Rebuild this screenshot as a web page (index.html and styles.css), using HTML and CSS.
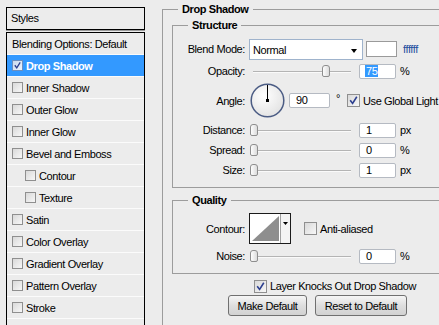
FILE: index.html
```html
<!DOCTYPE html>
<html lang="en">
<head>
  <meta charset="UTF-8">
  <title>Layer Style</title>
  <link rel="stylesheet" href="styles.css">
</head>
<body>
  <div class="dialog">
    <div class="sidebar">
      <div class="styles-head">Styles</div>
      <ul class="style-list">
        <li class="style-item plain">Blending Options: Default</li>
        <li class="style-item selected"><span class="check"><svg viewBox="0 0 11 11"><path d="M2.2 5.2 L4.6 8.4 L8.8 1.8" /></svg></span>Drop Shadow</li>
        <li class="style-item"><span class="check"></span>Inner Shadow</li>
        <li class="style-item"><span class="check"></span>Outer Glow</li>
        <li class="style-item"><span class="check"></span>Inner Glow</li>
        <li class="style-item"><span class="check"></span>Bevel and Emboss</li>
        <li class="style-item sub"><span class="check"></span>Contour</li>
        <li class="style-item sub"><span class="check"></span>Texture</li>
        <li class="style-item"><span class="check"></span>Satin</li>
        <li class="style-item"><span class="check"></span>Color Overlay</li>
        <li class="style-item"><span class="check"></span>Gradient Overlay</li>
        <li class="style-item"><span class="check"></span>Pattern Overlay</li>
        <li class="style-item"><span class="check"></span>Stroke</li>
        <li class="style-item"></li>
      </ul>
    </div>

    <div class="panel">
      <div class="group outer">
        <div class="group-title">Drop Shadow</div>

        <div class="group structure">
          <div class="group-title">Structure</div>

          <div class="row blend-row">
            <span class="label">Blend Mode:</span>
            <div class="select">Normal<span class="arrow"></span></div>
            <span class="swatch"></span>
            <span class="hex">ffffff</span>
          </div>

          <div class="row">
            <span class="label">Opacity:</span>
            <div class="slider"><span class="thumb" style="left: 72px"></span></div>
            <span class="field"><span class="sel">75</span></span>
            <span class="unit">%</span>
          </div>

          <div class="row angle-row">
            <span class="label">Angle:</span>
            <svg class="dial" viewBox="0 0 35 35">
              <defs>
                <radialGradient id="dialFill" cx="0.4" cy="0.35" r="0.7">
                  <stop offset="0" stop-color="#ffffff" />
                  <stop offset="1" stop-color="#e2e2e2" />
                </radialGradient>
              </defs>
              <circle cx="17.5" cy="17.5" r="16.3" fill="url(#dialFill)" stroke="#4b5c84" stroke-width="1.5" />
              <line x1="17.5" y1="17.5" x2="17.5" y2="2" stroke="#000" stroke-width="1" />
              <rect x="16" y="16" width="3" height="3" fill="#000" />
            </svg>
            <span class="field angle-field">90</span>
            <span class="degree">°</span>
            <span class="check big"><svg viewBox="0 0 11 11"><path d="M2.2 5.2 L4.6 8.4 L8.8 1.8" /></svg></span>
            <span class="check-text">Use Global Light</span>
          </div>

          <div class="row">
            <span class="label">Distance:</span>
            <div class="slider"><span class="thumb" style="left: 0px"></span></div>
            <span class="field">1</span>
            <span class="unit">px</span>
          </div>

          <div class="row">
            <span class="label">Spread:</span>
            <div class="slider"><span class="thumb" style="left: 0px"></span></div>
            <span class="field">0</span>
            <span class="unit">%</span>
          </div>

          <div class="row">
            <span class="label">Size:</span>
            <div class="slider"><span class="thumb" style="left: 0px"></span></div>
            <span class="field">1</span>
            <span class="unit">px</span>
          </div>
        </div>

        <div class="group quality">
          <div class="group-title">Quality</div>

          <div class="row contour-row">
            <span class="label">Contour:</span>
            <svg class="contour" viewBox="0 0 42 31">
              <rect x="0.5" y="0.5" width="41" height="30" fill="#ffffff" stroke="#1a1a1a" />
              <polygon points="3,28 30,3 30,28" fill="#8e8e8e" />
              <rect x="31" y="1" width="10" height="29" fill="#f4f4f4" />
              <line x1="31.5" y1="1" x2="31.5" y2="30" stroke="#a0a0a0" />
              <polygon points="34,9 39,9 36.5,12" fill="#000" />
            </svg>
            <span class="check big aa"></span>
            <span class="check-text">Anti-aliased</span>
          </div>

          <div class="row">
            <span class="label">Noise:</span>
            <div class="slider"><span class="thumb" style="left: 0px"></span></div>
            <span class="field">0</span>
            <span class="unit">%</span>
          </div>
        </div>

        <div class="knock-row">
          <span class="check big"><svg viewBox="0 0 11 11"><path d="M2.2 5.2 L4.6 8.4 L8.8 1.8" /></svg></span>
          <span class="check-text">Layer Knocks Out Drop Shadow</span>
        </div>

        <div class="buttons">
          <button class="btn make">Make Default</button>
          <button class="btn reset">Reset to Default</button>
        </div>
      </div>
    </div>
  </div>
</body>
</html>
```

FILE: styles.css
```css
body {
  margin: 0;
  background-color: #ececec;
  font-family: "Liberation Sans", Arial, sans-serif;
  font-size: 11px;
  letter-spacing: -0.4px;
  color: #000;
  overflow: hidden;
}
.dialog {
  display: flex;
  width: 439px;
  height: 325px;
  overflow: hidden;
}

/* left list */
.sidebar {
  width: 139px;
  margin: 7px 0 0 6px;
  flex-shrink: 0;
}
.styles-head {
  height: 21px;
  line-height: 20px;
  padding-left: 4px;
  border: 1px solid #000;
  box-shadow: 0 1px 0 #9a9a9a;
}
.style-list {
  list-style: none;
  margin: 2px 0 0 0;
  padding: 0;
  border: 1px solid #000;
  border-bottom: none;
  height: 400px;
}
.style-item {
  display: flex;
  align-items: center;
  height: 21px;
  padding-left: 5px;
  border-bottom: 1px solid #fbfbfb;
  white-space: nowrap;
}
.style-item.sub {
  padding-left: 18px;
}
.style-item.selected {
  background-color: #3399ff;
  color: #fff;
  font-weight: bold;
}
.check {
  display: inline-flex;
  width: 11px;
  height: 11px;
  box-sizing: border-box;
  border: 1px solid #8f8f8f;
  background: linear-gradient(135deg, #d9d9d9, #f7f7f7);
  margin-right: 3px;
  flex-shrink: 0;
}
.check svg {
  width: 100%;
  height: 100%;
}
.check path {
  fill: none;
  stroke: #2c3f8f;
  stroke-width: 1.6;
}
.selected .check {
  border-color: #6c8fbf;
  background: linear-gradient(135deg, #c9d9ee, #eef3fb);
}
.check.big {
  width: 13px;
  height: 13px;
}

/* right panel */
.panel {
  flex: 1;
  margin-left: 17px;
  min-width: 300px;
}
.group {
  border: 1px solid #9c9c9c;
  border-right: none;
}
.group.outer {
  margin-top: 9px;
  border-bottom: none;
  height: 400px;
}
.group-title {
  width: fit-content;
  height: 13px;
  line-height: 13px;
  margin: -7px 0 0 15px;
  padding: 0 4px;
  background-color: #ececec;
  font-weight: bold;
}
.group.structure {
  margin: 9px 0 0 9px;
  padding-bottom: 7px;
}
.group.quality {
  margin: 12px 0 0 9px;
  padding-bottom: 7px;
}
.row {
  display: flex;
  align-items: center;
  height: 20px;
  white-space: nowrap;
}
.label {
  width: 72px;
  text-align: right;
  margin-right: 4px;
  flex-shrink: 0;
}
.blend-row {
  height: 24px;
  margin-top: 5px;
}
.select {
  position: relative;
  width: 114px;
  height: 21px;
  box-sizing: border-box;
  border: 1px solid #9fb3cc;
  background-color: #fff;
  line-height: 21px;
  padding-left: 3px;
}
.arrow {
  position: absolute;
  right: 5px;
  top: 9px;
  border-left: 3px solid transparent;
  border-right: 3px solid transparent;
  border-top: 4px solid #000;
}
.swatch {
  width: 31px;
  height: 16px;
  box-sizing: border-box;
  border: 1px solid #9a9a9a;
  background-color: #fff;
  margin-left: 3px;
}
.hex {
  margin-left: 6px;
  color: #1f4f9f;
}
.slider {
  position: relative;
  width: 101px;
  height: 20px;
  margin-left: 1px;
}
.slider::before {
  content: "";
  position: absolute;
  left: 3px;
  right: 0;
  top: 10px;
  height: 1px;
  background-color: #b4b4b4;
  border-bottom: 1px solid #fafafa;
}
.thumb {
  position: absolute;
  top: 4px;
  width: 8px;
  height: 12px;
  box-sizing: border-box;
  border: 1px solid #8e8e8e;
  border-radius: 3px 3px 2px 2px;
  background: linear-gradient(90deg, #fdfdfd, #dcdcdc);
}
.field {
  display: inline-block;
  width: 37px;
  height: 15px;
  box-sizing: border-box;
  border: 1px solid #b5bac2;
  border-radius: 2px;
  background-color: #fff;
  line-height: 13px;
  padding-left: 6px;
  margin-left: 8px;
}
.sel {
  display: inline-block;
  background-color: #3399ff;
  color: #fff;
  line-height: 12px;
  padding: 0 1px;
  margin-left: -1px;
}
.unit {
  margin-left: 4px;
}
.angle-row {
  height: 39px;
}
.dial {
  width: 35px;
  height: 35px;
  margin-left: 1px;
}
.angle-field {
  width: 41px;
  margin-left: 4px;
}
.degree {
  margin-left: 6px;
  align-self: flex-start;
  margin-top: 11px;
}
.angle-row .check {
  margin-left: 7px;
}
.check-text {
  margin-left: 0;
}
.contour-row {
  height: 35px;
  margin-top: 4px;
}
.contour {
  width: 42px;
  height: 31px;
}
.check.aa {
  margin-left: 13px;
}
.knock-row {
  display: flex;
  align-items: center;
  height: 16px;
  margin: 4px 0 0 91px;
  white-space: nowrap;
}
.buttons {
  display: flex;
  gap: 8px;
  margin: 1px 0 0 65px;
}
.btn {
  height: 21px;
  padding: 0;
  border: 1px solid #707070;
  border-radius: 3px;
  background: linear-gradient(#f6f6f6, #dedede 50%, #d2d2d2);
  font-family: "Liberation Sans", Arial, sans-serif;
  font-size: 11px;
  letter-spacing: -0.4px;
  color: #000;
}
.btn.make {
  width: 79px;
}
.btn.reset {
  width: 92px;
}
```
